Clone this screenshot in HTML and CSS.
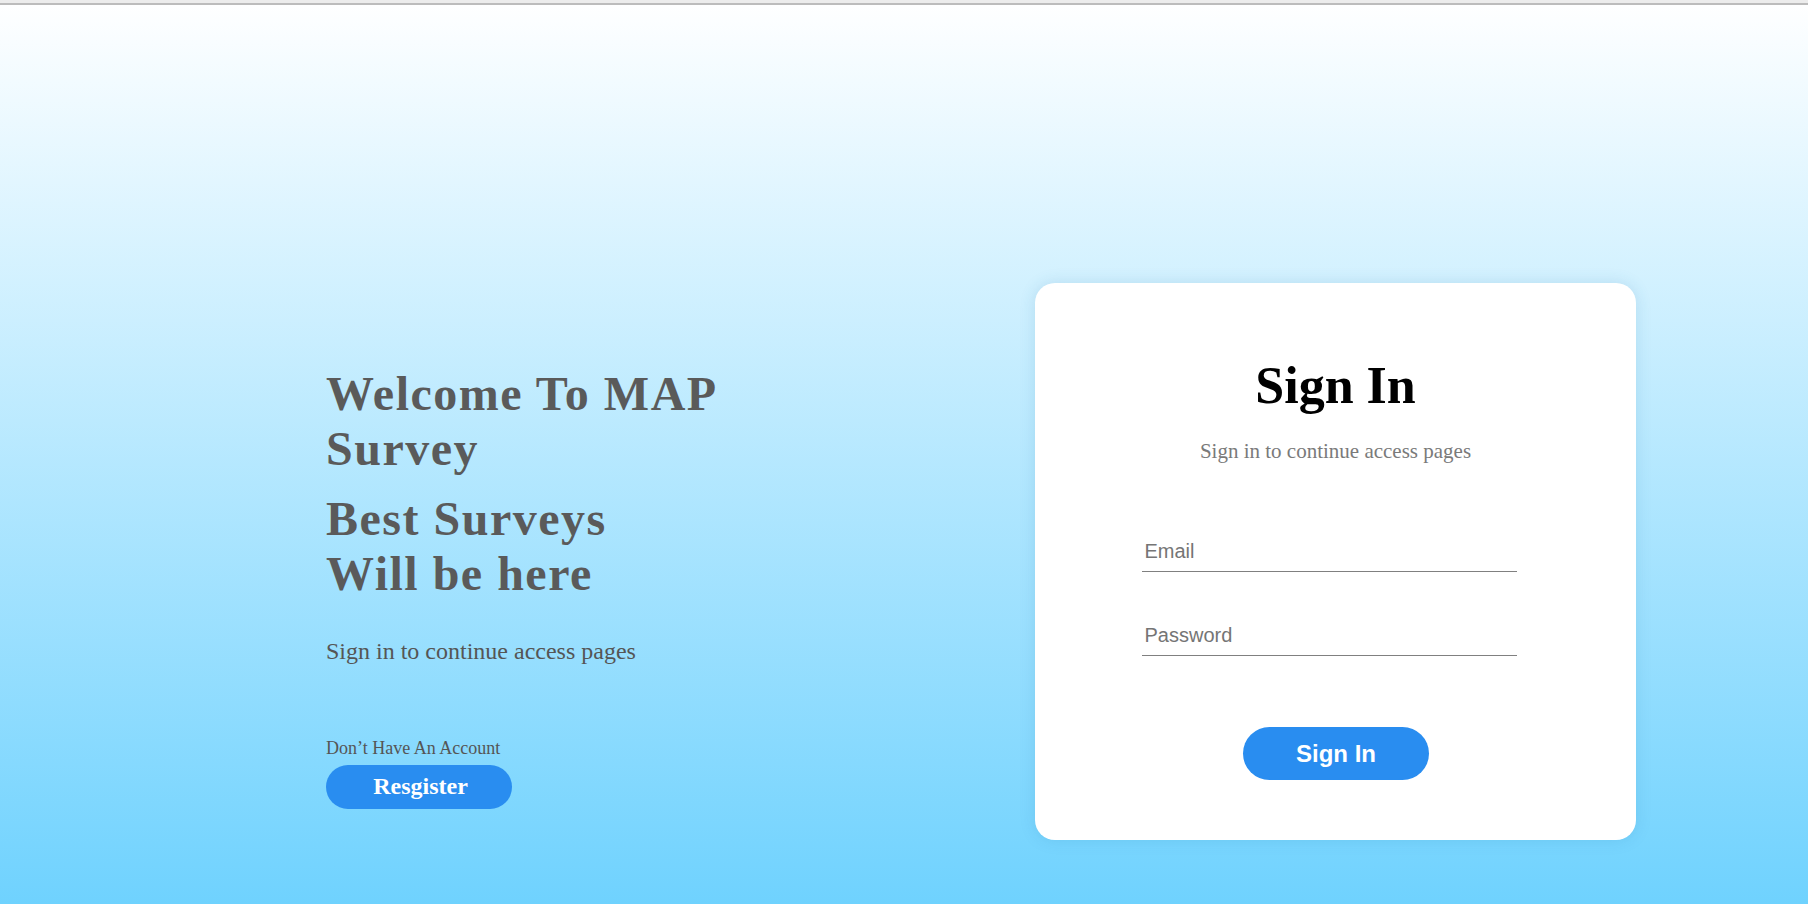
FILE: index.html
```html
<!DOCTYPE html>
<html lang="en">
<head>
<meta charset="utf-8">
<title>MAP Survey - Sign In</title>
<link rel="stylesheet" href="styles.css">
</head>
<body>
<div class="topline"></div>
<main class="page">
  <section class="intro">
    <h1 class="headline first">Welcome To MAP Survey</h1>
    <h1 class="headline second">Best Surveys<br>Will be here</h1>
    <p class="lead">Sign in to continue access pages</p>
    <p class="no-account">Don’t Have An Account</p>
    <button class="register-btn" type="button">Resgister</button>
  </section>
  <section class="card">
    <h2 class="card-title">Sign In</h2>
    <p class="card-sub">Sign in to continue access pages</p>
    <form class="form">
      <input class="field field-email" type="email" placeholder="Email">
      <input class="field field-password" type="password" placeholder="Password">
      <div class="actions">
        <button class="signin-btn" type="button">Sign In</button>
      </div>
    </form>
  </section>
</main>
</body>
</html>
```
FILE: styles.css
```css
html, body {
  margin: 0;
  padding: 0;
}
body {
  width: 1808px;
  height: 904px;
  overflow: hidden;
  font-family: "Liberation Serif", "Times New Roman", serif;
  background: linear-gradient(180deg, #ffffff 0%, #6fd2fe 100%);
}
.topline {
  height: 3px;
  background: #ececec;
  border-bottom: 2px solid #bcbcbc;
}
.page {
  display: flex;
  align-items: flex-start;
}
.intro {
  width: 430px;
  margin-left: 326px;
  margin-top: 361px;
  display: flex;
  flex-direction: column;
  align-items: flex-start;
}
.headline {
  margin: 0;
  font-size: 48px;
  line-height: 55px;
  font-weight: bold;
  letter-spacing: 1.5px;
  color: #5a5a5a;
}
.headline.second {
  margin-top: 15px;
}
.lead {
  margin: 37px 0 0;
  font-size: 24px;
  line-height: 27.6px;
  color: #555555;
}
.no-account {
  margin: 72px 0 0;
  font-size: 18px;
  line-height: 20px;
  color: #555555;
}
.register-btn {
  margin-top: 7px;
  width: 186px;
  height: 44px;
  border: none;
  border-radius: 22px;
  background: #298df0;
  color: #ffffff;
  font-family: "Liberation Serif", "Times New Roman", serif;
  font-weight: bold;
  font-size: 24px;
  padding: 0 0 0 3px;
  display: flex;
  align-items: center;
  justify-content: center;
}
.card {
  margin-left: auto;
  margin-right: 172px;
  margin-top: 278px;
  width: 601px;
  box-sizing: border-box;
  padding: 73px 0 60px;
  background: #ffffff;
  border-radius: 20px;
  box-shadow: 0 0 16px rgba(40, 120, 170, 0.16);
  display: flex;
  flex-direction: column;
  align-items: center;
}
.card-title {
  margin: 0;
  font-size: 52px;
  line-height: 60px;
  font-weight: bold;
  color: #000000;
}
.card-sub {
  margin: 23px 0 0;
  font-size: 21px;
  line-height: 24px;
  color: #7a7a7a;
}
.form {
  width: 389px;
  margin: 68px 0 0 1px;
  display: flex;
  flex-direction: column;
  align-items: flex-start;
}
.field {
  width: 375px;
  height: 41px;
  box-sizing: border-box;
  border: none;
  border-bottom: 1px solid #808080;
  padding: 0 3px;
  font-family: "Liberation Sans", Arial, sans-serif;
  font-size: 20px;
  color: #333;
  background: transparent;
  outline: none;
}
.field::placeholder {
  color: #757575;
}
.field-password {
  margin-top: 43px;
}
.actions {
  width: 389px;
  margin-top: 71px;
  display: flex;
  justify-content: center;
}
.signin-btn {
  width: 186px;
  height: 53px;
  border: none;
  border-radius: 27px;
  background: #298df0;
  color: #ffffff;
  font-family: "Liberation Sans", Arial, sans-serif;
  font-weight: bold;
  font-size: 24px;
  padding: 0;
}
```
